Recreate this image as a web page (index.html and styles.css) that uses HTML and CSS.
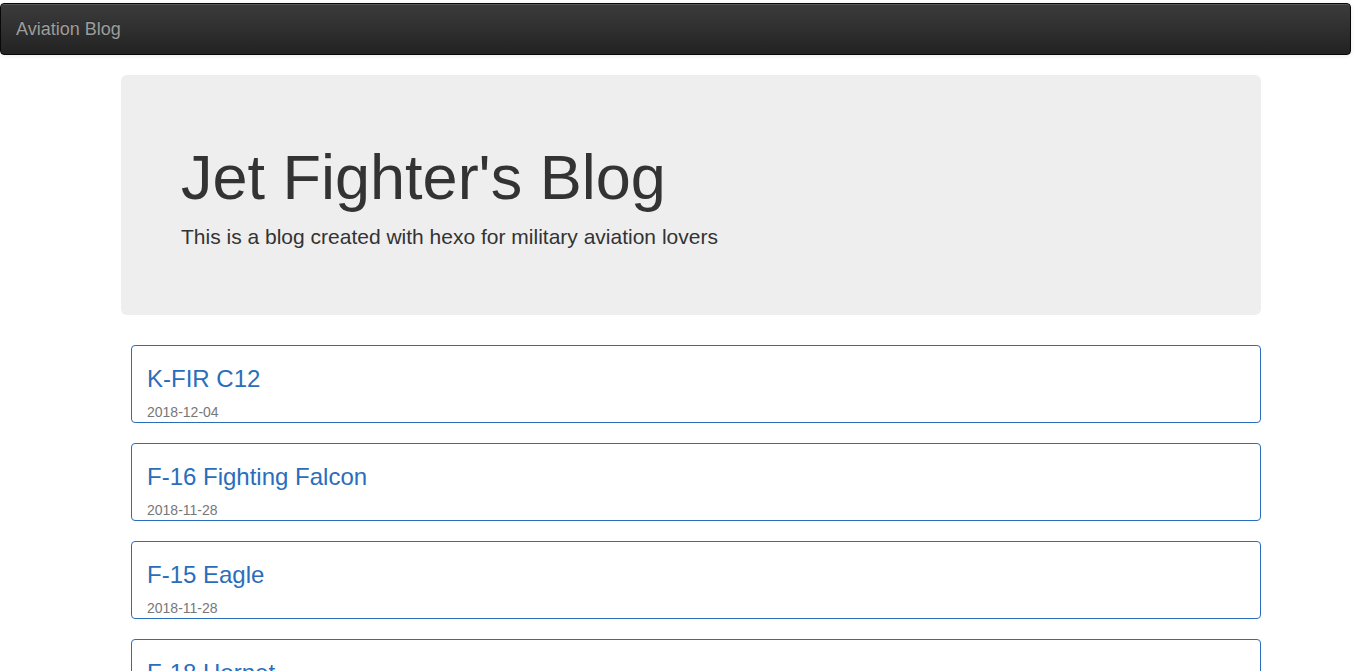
FILE: index.html
```html
<!DOCTYPE html>
<html lang="en">
<head>
    <meta charset="UTF-8">
    <meta name="viewport" content="width=device-width, initial-scale=1.0">
    <title>Aviation Blog</title>
    <link rel="stylesheet" href="styles.css">
</head>
<body>
    <nav class="navbar">
        <a class="navbar-brand" href="#">Aviation Blog</a>
    </nav>

    <div class="container">
        <div class="jumbotron">
            <h1>Jet Fighter's Blog</h1>
            <p>This is a blog created with hexo for military aviation lovers</p>
        </div>

        <div class="posts">
            <div class="post">
                <h3><a href="#">K-FIR C12</a></h3>
                <p class="post-date">2018-12-04</p>
            </div>
            <div class="post">
                <h3><a href="#">F-16 Fighting Falcon</a></h3>
                <p class="post-date">2018-11-28</p>
            </div>
            <div class="post">
                <h3><a href="#">F-15 Eagle</a></h3>
                <p class="post-date">2018-11-28</p>
            </div>
            <div class="post">
                <h3><a href="#">F-18 Hornet</a></h3>
                <p class="post-date">2018-11-28</p>
            </div>
        </div>
    </div>
</body>
</html>
```

FILE: styles.css
```css
* {
    box-sizing: border-box;
}

body {
    margin: 0;
    font-family: "Liberation Sans", Arial, sans-serif;
    font-size: 14px;
    line-height: 1.42857;
    color: #333;
    background-color: #fff;
}

.navbar {
    min-height: 50px;
    margin: 3px 14px 20px 0;
    border: 1px solid #080808;
    border-radius: 4px;
    background-image: linear-gradient(to bottom, #3c3c3c 0%, #222 100%);
    box-shadow: inset 0 1px 0 rgba(255,255,255,0.15), 0 1px 5px rgba(0,0,0,0.08);
}

.navbar-brand {
    display: block;
    height: 50px;
    padding: 15px;
    font-size: 18px;
    line-height: 20px;
    color: #9d9d9d;
    text-decoration: none;
    text-shadow: 0 -1px 0 rgba(0,0,0,0.25);
}

.container {
    width: 1140px;
    margin-left: 121px;
}

.jumbotron {
    padding: 48px 60px;
    margin-bottom: 30px;
    background-color: #eee;
    border-radius: 6px;
}

.jumbotron h1 {
    margin: 20px 0 10px;
    font-size: 63px;
    font-weight: 500;
    line-height: 1.1;
    color: #333;
}

.jumbotron p {
    margin: 0 0 15px;
    font-size: 21px;
    font-weight: 200;
}

.posts {
    margin-left: 10px;
}

.post {
    margin-bottom: 20px;
    padding: 0 15px;
    border: 1px solid #2a6ebb;
    border-radius: 4px;
}

.post h3 {
    margin: 20px 0 10px;
    font-size: 24px;
    font-weight: 500;
    line-height: 26px;
}

.post h3 a {
    color: #2a6ebb;
    text-decoration: none;
}

.post-date {
    margin: 0;
    line-height: 20px;
    color: #777;
}
```
